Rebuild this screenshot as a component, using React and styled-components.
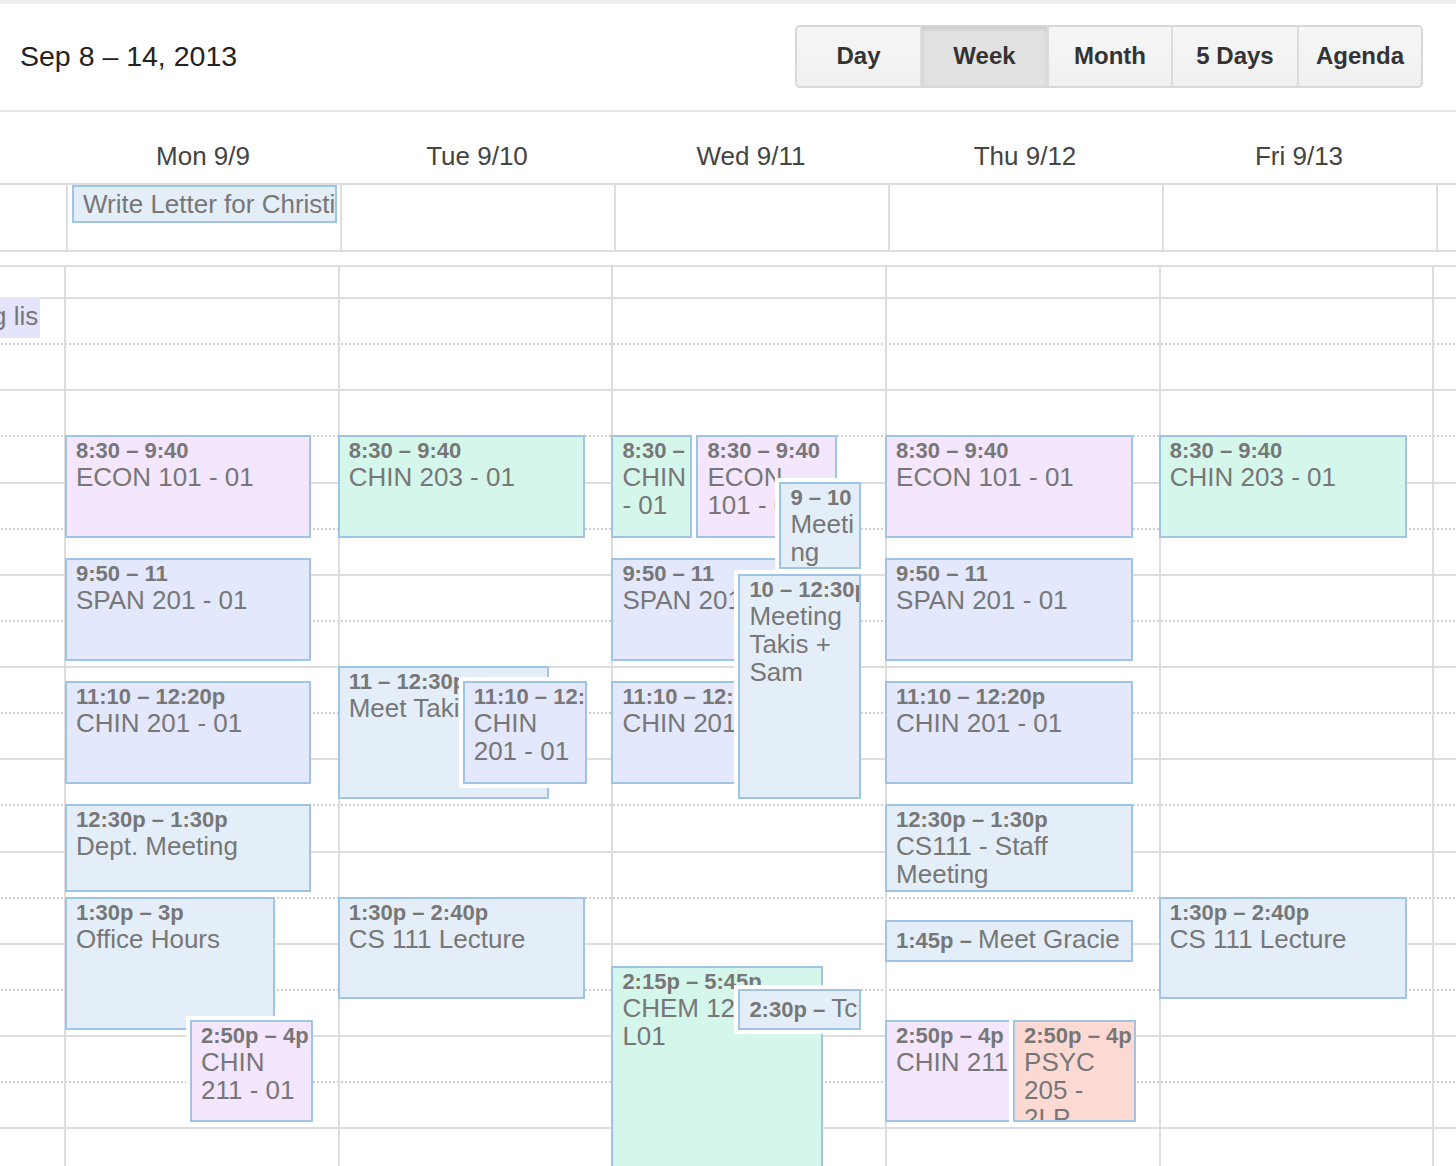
import React from "react"
import styled, { createGlobalStyle } from "styled-components"

const GlobalStyle = createGlobalStyle`
  html, body {
    margin: 0;
    padding: 0;
    background: #fff;
    overflow: hidden;
  }
  body {
    font-family: "Liberation Sans", Arial, Helvetica, sans-serif;
  }
`

// grid metrics
const HOUR = 92.25
const PX_MIN = HOUR / 60
const FIRST_HOUR = 6
const LAST_HOUR = 18
const GRID_COL = 273.7
const HEAD_COL = 274

const LAV = "#f3e6fd"
const PERI = "#e3e8fc"
const SKY = "#e4eef8"
const MINT = "#d5f6ea"
const SALMON = "#fdd9d3"
const TASK = "#e4e4fc"

const t = (h, m = 0) => h * 60 + m

const days = [
  {
    label: "Sun 9/8",
    events: [
      { s: t(7), e: t(7, 30), title: "Complete reading list", bg: TASK, border: TASK, compact: true, left: 0, width: 249.7 },
    ],
  },
  {
    label: "Mon 9/9",
    allDay: "Write Letter for Christina",
    events: [
      { s: t(8, 30), e: t(9, 40), time: "8:30 – 9:40", title: "ECON 101 - 01", bg: LAV, left: 1, width: 246 },
      { s: t(9, 50), e: t(11), time: "9:50 – 11", title: "SPAN 201 - 01", bg: PERI, left: 1, width: 246 },
      { s: t(11, 10), e: t(12, 20), time: "11:10 – 12:20p", title: "CHIN 201 - 01", bg: PERI, left: 1, width: 246 },
      { s: t(12, 30), e: t(13, 30), time: "12:30p – 1:30p", title: "Dept. Meeting", bg: SKY, left: 1, width: 246 },
      { s: t(13, 30), e: t(15), time: "1:30p – 3p", title: "Office Hours", bg: SKY, left: 1, width: 210 },
      { s: t(14, 50), e: t(16), time: "2:50p – 4p", title: "CHIN 211 - 01", bg: LAV, left: 126, width: 123, over: true },
    ],
  },
  {
    label: "Tue 9/10",
    events: [
      { s: t(8, 30), e: t(9, 40), time: "8:30 – 9:40", title: "CHIN 203 - 01", bg: MINT, left: 0, width: 247 },
      { s: t(11), e: t(12, 30), time: "11 – 12:30p", title: "Meet Takis", bg: SKY, left: 0, width: 211 },
      { s: t(11, 10), e: t(12, 20), time: "11:10 – 12:20p", title: "CHIN 201 - 01", bg: PERI, left: 125, width: 124, over: true },
      { s: t(13, 30), e: t(14, 40), time: "1:30p – 2:40p", title: "CS 111 Lecture", bg: SKY, left: 0, width: 247 },
    ],
  },
  {
    label: "Wed 9/11",
    events: [
      { s: t(8, 30), e: t(9, 40), time: "8:30 – 9:40", title: "CHIN - 01", bg: MINT, left: 0, width: 81 },
      { s: t(8, 30), e: t(9, 40), time: "8:30 – 9:40", title: "ECON 101 - 01", bg: LAV, left: 85, width: 141, over: true },
      { s: t(9, 50), e: t(11), time: "9:50 – 11", title: "SPAN 201 - 01", bg: PERI, left: 0, width: 200 },
      { s: t(9), e: t(10), time: "9 – 10", title: "Meeting", bg: SKY, left: 168, width: 82, over: true },
      { s: t(11, 10), e: t(12, 20), time: "11:10 – 12:20p", title: "CHIN 201 - 01", bg: PERI, left: 0, width: 200 },
      { s: t(10), e: t(12, 30), time: "10 – 12:30p", title: "Meeting Takis + Sam", bg: SKY, left: 127, width: 123, over: true },
      { s: t(14, 15), e: t(17, 45), time: "2:15p – 5:45p", title: "CHEM 121 - 01 L01", bg: MINT, left: 0, width: 212 },
      { s: t(14, 30), e: t(15), time: "2:30p –", title: "Tcm Tour", bg: SKY, left: 127, width: 123, over: true, compact: true },
    ],
  },
  {
    label: "Thu 9/12",
    events: [
      { s: t(8, 30), e: t(9, 40), time: "8:30 – 9:40", title: "ECON 101 - 01", bg: LAV, left: 0, width: 248 },
      { s: t(9, 50), e: t(11), time: "9:50 – 11", title: "SPAN 201 - 01", bg: PERI, left: 0, width: 248 },
      { s: t(11, 10), e: t(12, 20), time: "11:10 – 12:20p", title: "CHIN 201 - 01", bg: PERI, left: 0, width: 248 },
      { s: t(12, 30), e: t(13, 30), time: "12:30p – 1:30p", title: "CS111 - Staff Meeting", bg: SKY, left: 0, width: 248 },
      { s: t(13, 45), e: t(14, 16), time: "1:45p –", title: "Meet Gracie", bg: SKY, left: 0, width: 248, compact: true },
      { s: t(14, 50), e: t(16), time: "2:50p – 4p", title: "CHIN 211 - 01", bg: LAV, left: 0, width: 248 },
      { s: t(14, 50), e: t(16), time: "2:50p – 4p", title: "PSYC 205 - 2LP", bg: SALMON, left: 128, width: 123, over: true },
    ],
  },
  {
    label: "Fri 9/13",
    events: [
      { s: t(8, 30), e: t(9, 40), time: "8:30 – 9:40", title: "CHIN 203 - 01", bg: MINT, left: 0, width: 248 },
      { s: t(13, 30), e: t(14, 40), time: "1:30p – 2:40p", title: "CS 111 Lecture", bg: SKY, left: 0, width: 248 },
    ],
  },
  { label: "Sat 9/14", events: [] },
]

const views = [
  { name: "Day", w: 123 },
  { name: "Week", w: 127, active: true },
  { name: "Month", w: 124 },
  { name: "5 Days", w: 126 },
  { name: "Agenda", w: 124 },
]

const Page = styled.div`
  width: 1456px;
  height: 1166px;
  box-sizing: border-box;
  border-top: 4px solid #efefef;
  display: flex;
  flex-direction: column;
  overflow: hidden;
`

const Toolbar = styled.div`
  height: 108px;
  box-sizing: border-box;
  border-bottom: 2px solid #e6e6e6;
  padding: 0 33px 0 20px;
  display: flex;
  align-items: center;
  justify-content: space-between;
  flex-shrink: 0;
`

const Title = styled.h1`
  margin: 0 0 2px;
  font-size: 28.5px;
  font-weight: normal;
  color: #222;
`

const ViewGroup = styled.div`
  display: flex;
  height: 63px;
  margin-bottom: 2px;
  box-sizing: border-box;
  border: 2px solid #d8d8d8;
  border-radius: 5px;
  overflow: hidden;
`

const ViewButton = styled.button`
  width: ${p => p.$w}px;
  height: 100%;
  margin: 0;
  padding: 0;
  border: none;
  border-left: 2px solid #dcdcdc;
  &:first-child {
    border-left: none;
  }
  font-family: inherit;
  font-size: 24px;
  font-weight: bold;
  color: #333;
  background: ${p => (p.$active ? "#e2e2e2" : "linear-gradient(#f6f6f6, #f0f0f0)")};
  box-shadow: ${p => (p.$active ? "inset 0 2px 4px rgba(0, 0, 0, 0.12)" : "none")};
  cursor: pointer;
`

const Strip = styled.div`
  overflow: hidden;
  flex-shrink: 0;
`

const HeadTrack = styled.div`
  display: flex;
  margin-left: ${-(HEAD_COL - 66)}px;
`

const DayHeads = styled(Strip)`
  height: 73px;
  box-sizing: border-box;
  border-bottom: 2px solid #ddd;
`

const DayHead = styled.div`
  width: ${HEAD_COL}px;
  flex-shrink: 0;
  height: 71px;
  display: flex;
  align-items: flex-end;
  justify-content: center;
  padding-bottom: 12px;
  box-sizing: border-box;
  font-size: 26px;
  line-height: 30px;
  color: #444;
`

const AllDayRow = styled(Strip)`
  height: 67px;
  box-sizing: border-box;
  border-bottom: 2px solid #ddd;
  margin-bottom: 13px;
`

const AllDayCell = styled.div`
  width: ${HEAD_COL}px;
  height: 65px;
  flex-shrink: 0;
  box-sizing: border-box;
  border-left: 2px solid #ddd;
  padding: 0 3px 0 4px;
`

const AllDayEvent = styled.div`
  height: 38px;
  box-sizing: border-box;
  border: 2px solid #a0c4e6;
  background: ${SKY};
  padding-left: 9px;
  font-size: 26px;
  line-height: 34px;
  color: #777;
  white-space: nowrap;
  overflow: hidden;
`

const GridView = styled.div`
  flex: 1;
  min-height: 0;
  border-top: 2px solid #ddd;
  overflow: hidden;
`

const GridTrack = styled.div`
  display: grid;
  width: ${GRID_COL * 7}px;
  margin-left: ${-(GRID_COL - 64)}px;
  margin-top: -62.25px;
`

const Rows = styled.div`
  grid-area: 1 / 1;
  display: flex;
  flex-direction: column;
`

const HalfSlot = styled.div`
  height: ${HOUR / 2}px;
  box-sizing: border-box;
  border-top: 2px ${p => (p.$half ? "dotted #cfcfcf" : "solid #ddd")};
`

const Columns = styled.div`
  grid-area: 1 / 1;
  display: flex;
`

const DayColumn = styled.div`
  position: relative;
  width: ${GRID_COL}px;
  flex-shrink: 0;
  background: linear-gradient(#ddd, #ddd) 0 0 / 2px 100% no-repeat;
`

const Event = styled.div`
  position: absolute;
  box-sizing: border-box;
  border: 2px solid ${p => p.$border};
  background: ${p => p.$bg};
  padding: ${p => (p.$compact ? "2px 0 0 9px" : "1px 0 0 9px")};
  overflow: hidden;
  color: #777;
  box-shadow: ${p => (p.$over ? "-4px 4px 0 #fff, -4px -4px 0 #fff" : "none")};
`

const EventTime = styled.div`
  font-size: 22px;
  line-height: 25px;
  font-weight: bold;
  white-space: nowrap;
`

const EventTitle = styled.div`
  width: 97%;
  font-size: 26px;
  line-height: 28px;
  overflow-wrap: break-word;
`

const EventLine = styled.div`
  font-size: 26px;
  line-height: 30px;
  white-space: nowrap;
  b {
    font-size: 22px;
  }
`

function CalEvent({ ev }) {
  const style = {
    top: (ev.s - FIRST_HOUR * 60) * PX_MIN,
    height: (ev.e - ev.s) * PX_MIN - 5,
    left: ev.left,
    width: ev.width,
  }
  return (
    <Event
      style={style}
      $bg={ev.bg}
      $border={ev.border || "#a0c4e6"}
      $over={ev.over}
      $compact={ev.compact}
    >
      {ev.compact ? (
        <EventLine>
          {ev.time && <b>{ev.time} </b>}
          {ev.title}
        </EventLine>
      ) : (
        <>
          <EventTime>{ev.time}</EventTime>
          <EventTitle>{ev.title}</EventTitle>
        </>
      )}
    </Event>
  )
}

export default function App() {
  const halves = []
  for (let h = FIRST_HOUR; h < LAST_HOUR; h++) {
    halves.push(<HalfSlot key={h + "a"} />)
    halves.push(<HalfSlot key={h + "b"} $half />)
  }

  return (
    <>
      <GlobalStyle />
      <Page>
        <Toolbar>
          <Title>Sep 8 – 14, 2013</Title>
          <ViewGroup>
            {views.map(v => (
              <ViewButton key={v.name} $w={v.w} $active={v.active}>
                {v.name}
              </ViewButton>
            ))}
          </ViewGroup>
        </Toolbar>

        <DayHeads>
          <HeadTrack>
            {days.map(d => (
              <DayHead key={d.label}>{d.label}</DayHead>
            ))}
          </HeadTrack>
        </DayHeads>

        <AllDayRow>
          <HeadTrack>
            {days.map(d => (
              <AllDayCell key={d.label}>
                {d.allDay && <AllDayEvent>{d.allDay}</AllDayEvent>}
              </AllDayCell>
            ))}
          </HeadTrack>
        </AllDayRow>

        <GridView>
          <GridTrack>
            <Rows>{halves}</Rows>
            <Columns>
              {days.map(d => (
                <DayColumn key={d.label}>
                  {d.events.map((ev, i) => (
                    <CalEvent key={i} ev={ev} />
                  ))}
                </DayColumn>
              ))}
            </Columns>
          </GridTrack>
        </GridView>
      </Page>
    </>
  )
}
